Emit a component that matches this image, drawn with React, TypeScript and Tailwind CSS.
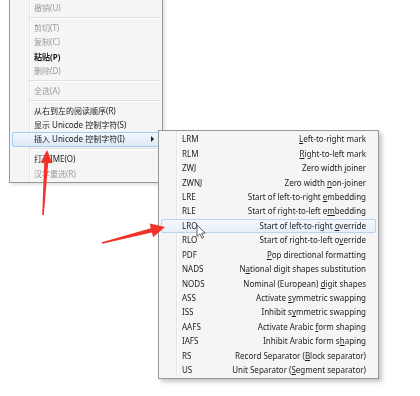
import React from "react";

type MainEntry = { label?: string; disabled?: boolean; bold?: boolean; active?: boolean; sub?: boolean; sep?: boolean };

const mainItems: MainEntry[] = [
  { label: "撤销(U)", disabled: true },
  { sep: true },
  { label: "剪切(T)", disabled: true },
  { label: "复制(C)", disabled: true },
  { label: "粘贴(P)", bold: true },
  { label: "删除(D)", disabled: true },
  { sep: true },
  { label: "全选(A)", disabled: true },
  { sep: true },
  { label: "从右到左的阅读顺序(R)" },
  { label: "显示 Unicode 控制字符(S)" },
  { label: "插入 Unicode 控制字符(I)", active: true, sub: true },
  { sep: true },
  { label: "打开IME(O)" },
  { label: "汉字重选(R)", disabled: true },
];

// "&" marks the access key
const controlChars: [string, string][] = [
  ["LRM", "&Left-to-right mark"],
  ["RLM", "&Right-to-left mark"],
  ["ZWJ", "Zero width &joiner"],
  ["ZWNJ", "Zero width &non-joiner"],
  ["LRE", "Start of left-to-right &embedding"],
  ["RLE", "Start of right-to-left e&mbedding"],
  ["LRO", "Start of left-to-right &override"],
  ["RLO", "Start of right-to-left o&verride"],
  ["PDF", "&Pop directional formatting"],
  ["NADS", "N&ational digit shapes substitution"],
  ["NODS", "Nominal (European) &digit shapes"],
  ["ASS", "Activate &symmetric swapping"],
  ["ISS", "Inhibit s&ymmetric swapping"],
  ["AAFS", "Activate Arabic &form shaping"],
  ["IAFS", "Inhibit Arabic form s&haping"],
  ["RS", "Record Separator (&Block separator)"],
  ["US", "Unit Separator (&Segment separator)"],
];

const AccessLabel = ({ text }: { text: string }) => {
  const i = text.indexOf("&");
  if (i < 0) return <>{text}</>;
  return (
    <>
      {text.slice(0, i)}
      <span className="underline underline-offset-[1px]">{text[i + 1]}</span>
      {text.slice(i + 2)}
    </>
  );
};

const MainMenu = () => (
  <div className="mt-[-2px] flex w-[154px] flex-col border border-[#979797] bg-[linear-gradient(to_right,#f5f5f5_19px,#e4e4e4_19px,#e4e4e4_20px,#fff_20px,#fff_21px,#f5f5f5_21px)] px-[2px] pt-[2px] pb-[1px] shadow-[2px_2px_3px_rgba(0,0,0,0.12)]">
    {mainItems.map((it, idx) =>
      it.sep ? (
        <div key={idx} className="flex h-[5.4px] items-center pl-[18px]">
          <div className="w-full border-t border-b border-t-[#e0e0e0] border-b-white" />
        </div>
      ) : (
        <div
          key={idx}
          className={`flex h-[14.4px] items-center rounded-[2px] border pl-[21px] pr-[5px] ${
            it.active ? "border-[#a8caf0] bg-gradient-to-b from-[#f2f7fd] to-[#dde9f7]" : "border-transparent"
          }`}
        >
          <span className={`leading-none ${it.disabled ? "text-[#9b9b9b]" : "text-[#1c1c1c]"} ${it.bold ? "font-bold" : ""}`}>
            {it.label}
          </span>
          {it.sub && (
            <span className="ml-auto h-0 w-0 border-y-[3px] border-l-[3.5px] border-y-transparent border-l-[#222]" />
          )}
        </div>
      )
    )}
  </div>
);

const SubMenu = () => (
  <div className="absolute left-[158px] top-[130px] flex w-[221px] flex-col border border-[#979797] bg-[linear-gradient(to_right,#f5f5f5_17px,#e4e4e4_17px,#e4e4e4_18px,#fff_18px,#fff_19px,#f5f5f5_19px)] px-[2px] py-[1px] shadow-[3px_3px_4px_rgba(0,0,0,0.22)]">
    {controlChars.map(([code, desc]) => (
      <div
        key={code}
        className={`flex h-[14.45px] items-center rounded-[2px] border pl-[20px] pr-[9px] text-[#1c1c1c] ${
          code === "LRO" ? "border-[#b9d3f0] bg-gradient-to-b from-[#f5f9fe] to-[#e6eff9]" : "border-transparent"
        }`}
      >
        <span className="leading-none">{code}</span>
        <span className="ml-auto leading-none">
          <AccessLabel text={desc} />
        </span>
      </div>
    ))}
  </div>
);

const Overlay = () => (
  <svg className="pointer-events-none absolute inset-0" width="420" height="396" viewBox="0 0 420 396">
    {/* arrow pointing up at 打开IME */}
    <polygon points="47,150 52.5,163.3 48.2,163.1 43.8,215 42.2,215 44.2,162.9 40.7,162.7" fill="#f0342c" />
    {/* arrow pointing at LRO */}
    <polygon points="165,227 153.1,237.2 152.0,232.5 102.2,243.8 101.8,242.2 150.8,228.2 149.7,223.6" fill="#f0342c" />
    {/* mouse pointer */}
    <g transform="translate(197,225) scale(0.72)">
      <path d="M0 0 L0 16 L4 12.2 L7 18.5 L9.3 17.4 L6.4 11.3 L11.5 11.3 Z" fill="#fff" stroke="#4a4a4a" strokeWidth="1.2" strokeLinejoin="round" />
    </g>
  </svg>
);

export default function App() {
  return (
    <div className="relative h-[396px] w-[420px] overflow-hidden bg-white font-['Noto_Sans','Noto_Sans_CJK_SC',sans-serif] text-[8px] blur-[0.3px]">
      <div className="pl-[9px]">
        <MainMenu />
      </div>
      <SubMenu />
      <Overlay />
    </div>
  );
}
